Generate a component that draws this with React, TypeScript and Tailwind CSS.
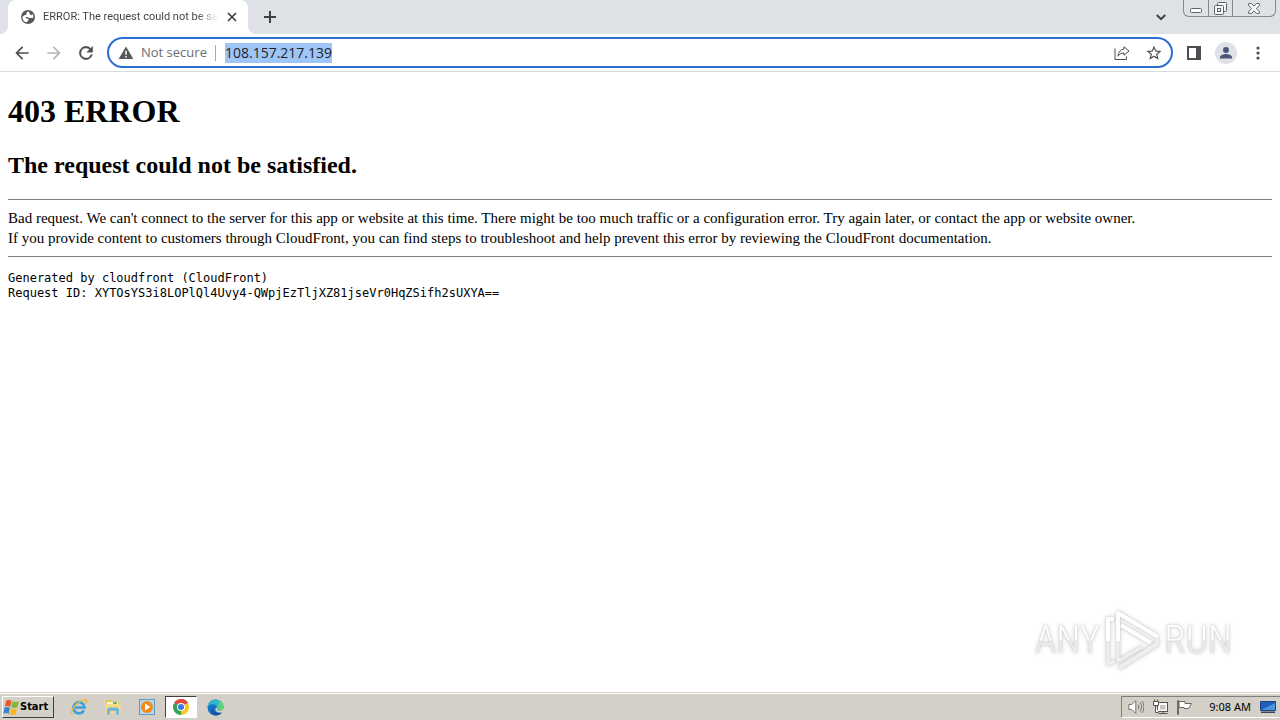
import type { ReactNode } from 'react'

const REQUEST_ID = 'XYTOsYS3i8LOPlQl4Uvy4-QWpjEzTljXZ81jseVr0HqZSifh2sUXYA=='

function IconButton({ label, children }: { label: string; children: ReactNode }) {
  return (
    <button aria-label={label} className="flex h-8 w-8 shrink-0 items-center justify-center text-[#4b4e52]">
      {children}
    </button>
  )
}

function WindowControls() {
  return (
    <div className="mr-1 flex h-[17px] w-[93px] shrink-0 rounded-b-md border border-t-0 border-[#85898f] text-[#5f6368]">
      <button aria-label="Minimize" className="flex flex-1 items-end justify-center pb-[3px]">
        <svg width="12" height="5" viewBox="0 0 12 5" fill="#fff" stroke="currentColor">
          <rect x="0.5" y="0.5" width="11" height="4" rx="1" />
        </svg>
      </button>
      <button aria-label="Restore" className="flex flex-1 items-center justify-center border-x border-[#85898f]">
        <svg width="13" height="13" viewBox="0 0 13 13" fill="#f4f5f7" stroke="currentColor">
          <rect x="3.5" y="0.5" width="9" height="9" rx="1" />
          <rect x="0.5" y="3.5" width="9" height="9" rx="1" />
          <rect x="3.5" y="6.5" width="3" height="3" />
        </svg>
      </button>
      <button aria-label="Close window" className="flex w-[42px] items-center justify-center">
        <svg width="12" height="11" viewBox="0 0 12 11" fill="#fff" stroke="currentColor" strokeLinejoin="round">
          <path d="M.6.6h3L6 3.2 8.400.6h3v1.900L8.300 5.500l3.100 3v1.900h-3L6 7.800l-2.400 2.600h-3V8.500l3.100-3-3.100-3z" />
        </svg>
      </button>
    </div>
  )
}

function TabStrip() {
  return (
    <div className="flex h-[34px] justify-between bg-[#dee1e6]">
      <div className="flex">
        <div className="flex w-2 items-end bg-white">
          <div className="h-full w-2 rounded-br-lg bg-[#dee1e6]" />
        </div>
        <div className="flex w-60 items-center rounded-t-lg bg-white pr-2 pl-3">
          <svg width="16" height="16" viewBox="0 0 16 16" className="shrink-0">
            <circle cx="8" cy="8" r="7" fill="#54575b" />
            <path
              d="M9.500 2.600C7.500 2.500 6 3.600 6.500 4.800c.3.800-.5 1.200-1.500 1.300-1.200.2-1 1.300-2.600 1.300C2.100 9.600 3.200 12 5.500 13.100c1.200.5 1.800.2 1.900-.7.1-1 1.300-.9 1.200-2C8.500 9.200 7 9.700 6 9.200c-.8-.5-.4-1.300.6-1.300 1.700-.1 2.200 1.200 3.600 1.100 1.200-.1 2 .3 3.100-.3.3-1.400 0-2.700-.7-3.800-.6.900-1.500 1.300-2.300.8-.7-.5-.1-1.300-.9-1.700-.7-.4-.6-1 .1-1.400z"
              fill="#fff"
            />
          </svg>
          <span className="mr-auto ml-[7px] bg-linear-to-r from-[#3c4043] from-88% to-transparent bg-clip-text font-['Roboto',sans-serif] text-[11px] leading-4 whitespace-nowrap text-transparent">
            ERROR: The request could not be sa
          </span>
          <button aria-label="Close tab" className="ml-1 flex h-4 w-4 items-center justify-center">
            <svg width="10" height="10" viewBox="0 0 10 10" stroke="#3c4043" strokeWidth="1.700">
              <path d="m1 1 8 8M9 1 1 9" />
            </svg>
          </button>
        </div>
        <div className="w-2 bg-white">
          <div className="h-full rounded-bl-lg bg-[#dee1e6]" />
        </div>
        <button aria-label="New tab" className="flex h-[34px] w-7 items-center justify-center">
          <svg width="12" height="12" viewBox="0 0 12 12" stroke="#3c4043" strokeWidth="2">
            <path d="M6 0v12M0 6h12" />
          </svg>
        </button>
      </div>
      <div className="flex">
        <button aria-label="Search tabs" className="mr-[10px] flex h-[34px] w-6 items-center justify-center">
          <svg width="10" height="7" viewBox="0 0 10 7" fill="none" stroke="#3c4043" strokeWidth="2">
            <path d="m.8 1 4.200 4.200L9.200 1" />
          </svg>
        </button>
        <WindowControls />
      </div>
    </div>
  )
}

function Toolbar() {
  return (
    <div className="flex h-[38px] items-center border-b border-[#dadce0] bg-white pr-[6px] pl-[6px]">
      <IconButton label="Back">
        <svg width="20" height="20" viewBox="0 0 24 24" fill="currentColor">
          <path d="M20 11H7.830l5.590-5.590L12 4l-8 8 8 8 1.410-1.410L7.830 13H20z" />
        </svg>
      </IconButton>
      <IconButton label="Forward">
        <svg width="20" height="20" viewBox="0 0 24 24" fill="#b4b6b9">
          <path d="m12 4-1.410 1.410L16.170 11H4v2h12.170l-5.580 5.590L12 20l8-8z" />
        </svg>
      </IconButton>
      <IconButton label="Reload">
        <svg width="20" height="20" viewBox="0 0 24 24" fill="currentColor" stroke="currentColor" strokeWidth="0.500">
          <path d="M17.650 6.350A8 8 0 1 0 19.730 14h-2.080A6 6 0 1 1 12 6c1.660 0 3.140.690 4.220 1.780L13 11h7V4z" />
        </svg>
      </IconButton>
      <div className="ml-[5px] flex h-[31px] min-w-0 flex-1 items-center rounded-full border-2 border-[#2b6fd0] bg-white pr-[1px] pl-[9px] font-['Open_Sans',sans-serif] text-sm">
        <svg width="16" height="16" viewBox="0 0 16 16" className="shrink-0">
          <path d="M8 1.500 15.300 14H.7z" fill="#54575b" />
          <path d="M8 5.800v4M8 11v1.500" stroke="#fff" strokeWidth="1.500" />
        </svg>
        <span className="ml-[7px] text-[13px] whitespace-nowrap text-[#6a6d71]">Not secure</span>
        <span className="mr-[9px] ml-2 h-4 w-px bg-[#a5a8ac]" />
        <input
          aria-label="Address and search bar"
          defaultValue="108.157.217.139"
          className="field-sizing-content h-5 bg-[#9ec5f6] text-[#1f2328] outline-none"
        />
        <div className="flex-1" />
        <IconButton label="Share this page">
          <svg width="16" height="16" viewBox="0 0 16 16" fill="none" stroke="currentColor">
            <path d="M1 3.500v11h11.500v-3" />
            <path d="M10 1.800 15 6l-5 4.200V8C7.200 8 5.400 9 4 11.200c.2-3.600 2.200-6.700 6-7.200z" strokeLinejoin="round" />
          </svg>
        </IconButton>
        <IconButton label="Bookmark this tab">
          <svg width="18" height="18" viewBox="0 0 24 24" fill="currentColor">
            <path d="m22 9.240-7.190-.620L12 2 9.190 8.630 2 9.240l5.460 4.730L5.820 21 12 17.270 18.180 21l-1.630-7.030zM12 15.400l-3.760 2.270 1-4.280-3.320-2.880 4.380-.380L12 6.100l1.710 4.040 4.380.380-3.320 2.880 1 4.280z" />
          </svg>
        </IconButton>
      </div>
      <div className="ml-[5px] flex">
        <IconButton label="Side panel">
          <svg width="14" height="14" viewBox="0 0 14 14">
            <path d="M0 0h14v14H0zm2 2v10h7V2z" fill="currentColor" fillRule="evenodd" />
          </svg>
        </IconButton>
        <IconButton label="Profile">
          <svg width="22" height="22" viewBox="0 0 22 22">
            <circle cx="11" cy="11" r="11" fill="#dee1e6" />
            <circle cx="11" cy="8" r="3" fill="#4a5673" />
            <path d="M5 16.500v-1.300c0-2.100 4-3.200 6-3.200s6 1.100 6 3.200v1.300z" fill="#4a5673" />
          </svg>
        </IconButton>
        <IconButton label="Menu">
          <svg width="4" height="14" viewBox="0 0 4 14" fill="currentColor">
            <circle cx="2" cy="2" r="1.600" />
            <circle cx="2" cy="7" r="1.600" />
            <circle cx="2" cy="12" r="1.600" />
          </svg>
        </IconButton>
      </div>
    </div>
  )
}

function Watermark() {
  return (
    <div className="absolute right-12 bottom-5 flex items-center gap-[3px] font-['Roboto_Condensed','Liberation_Sans_Narrow','Liberation_Sans',sans-serif] text-[39px] leading-none font-light [filter:drop-shadow(0_0_1px_#c8c8c8)_drop-shadow(0_0_2px_#dcdcdc)]">
      <span className="bg-linear-to-b from-white from-50% to-[#ececec] to-50% bg-clip-text text-transparent">ANY</span>
      <svg width="58" height="64" viewBox="0 0 58 64" fill="none" strokeLinejoin="round">
        <path d="M5 33v23l7-3M15 33v20l24-14" stroke="#efefef" strokeWidth="3" />
        <path d="M16 60 54 36v-5" stroke="#efefef" strokeWidth="4" />
        <path d="M5 33V11h6M15 33V5l40 24" stroke="#fff" strokeWidth="4" />
        <path d="M18 17l30 18" stroke="#fff" strokeWidth="4" />
      </svg>
      <span className="bg-linear-to-b from-white from-50% to-[#ececec] to-50% bg-clip-text text-transparent">RUN</span>
    </div>
  )
}

function ErrorPage() {
  return (
    <main className="relative flex-1 bg-white px-2 pt-5 text-black">
      <div className="font-['Liberation_Serif',serif] text-[15px] leading-5">
        <h1 className="text-[32px] leading-[38px] font-bold">403 ERROR</h1>
        <h2 className="mt-[21px] text-2xl leading-7 font-bold">The request could not be satisfied.</h2>
        <hr className="mt-5 mb-2 border-[#808080]" />
        <p>
          Bad request. We can't connect to the server for this app or website at this time. There might be too much
          traffic or a configuration error. Try again later, or contact the app or website owner.
          <br />
          If you provide content to customers through CloudFront, you can find steps to troubleshoot and help prevent
          this error by reviewing the CloudFront documentation.
        </p>
        <hr className="mt-2 mb-[14px] border-[#808080]" />
      </div>
      <pre className="font-['DejaVu_Sans_Mono',monospace] text-xs leading-[15px]">
        {`Generated by cloudfront (CloudFront)\nRequest ID: ${REQUEST_ID}`}
      </pre>
      <Watermark />
    </main>
  )
}

function WindowsFlag() {
  return (
    <svg width="17" height="17" viewBox="0 0 16 16" className="shrink-0">
      <path d="M3 1.500c2-1 3.600-.8 5 .1L6.800 7.300C5.300 6.400 3.700 6.300 1.800 7z" fill="#e8582b" />
      <path d="M8.800 2c1.800.9 3.600 1 6.200.1l-1.500 5.700c-2 .9-4.100.8-5.800-.1z" fill="#7fb83c" />
      <path d="M1.500 8c1.900-.8 3.500-.6 5 .3L5.300 14c-1.500-1-3.100-1-5-.3z" fill="#3f83c9" />
      <path d="M7.400 8.700c1.700.9 3.500 1 5.800.2l-1.400 5.700c-2 .8-3.900.7-5.600-.2z" fill="#f6b92c" />
    </svg>
  )
}

function InternetExplorerIcon() {
  return (
    <svg width="18" height="18" viewBox="0 0 18 18" fill="none">
      <path d="M14 12.300A5.600 5.600 0 1 1 14.600 9.500H5" stroke="#3a9fdc" strokeWidth="2.600" />
      <path d="M2.500 16.300C-.5 14 4.500 7 10 3.400c3.200-2.100 6.200-2.600 6.600-1 .2.800-.2 2-1 3.200" stroke="#e9b93a" strokeWidth="1.400" />
    </svg>
  )
}

function ExplorerIcon() {
  return (
    <svg width="18" height="18" viewBox="0 0 18 18">
      <path d="M2 2h5l1 1.500h7V13H2z" fill="#e8c65e" />
      <path d="M3 4h11v3H3z" fill="#fdf6d3" />
      <path d="M9 4h4v2H9z" fill="#6fb36c" />
      <path d="M1.500 6h15v9h-15z" fill="#f3da83" />
      <path d="M3 16.500V12c0-1.500 1-2.500 2.500-2.500h7c1.500 0 2.500 1 2.500 2.500v4.500h-3V13H6v3.500z" fill="#72b5dd" />
    </svg>
  )
}

function MediaPlayerIcon() {
  return (
    <svg width="18" height="18" viewBox="0 0 18 18">
      <rect x="1.500" y="1.500" width="15" height="15" fill="#b9d7ef" stroke="#5c9cc9" />
      <circle cx="9" cy="9" r="6" fill="#f28a1b" />
      <path d="M7 5.500v7l5.500-3.500z" fill="#fff" />
    </svg>
  )
}

function ChromeIcon() {
  return (
    <svg width="16" height="16" viewBox="0 0 16 16">
      <path d="M8 8 1.070 4A8 8 0 0 1 14.930 4z" fill="#df4a3c" />
      <path d="M8 8l6.930-4A8 8 0 0 1 8 16z" fill="#fbc820" />
      <path d="M8 8v8A8 8 0 0 1 1.070 4z" fill="#35a354" />
      <path d="M8 16l3.460-6L8 8z" fill="#fbc820" />
      <path d="M1.070 4l3.470 6L8 8z" fill="#35a354" />
      <path d="M8 4h6.930A8 8 0 0 0 8 0z" fill="#df4a3c" />
      <circle cx="8" cy="8" r="4" fill="#fff" />
      <circle cx="8" cy="8" r="3" fill="#3979e8" />
    </svg>
  )
}

function EdgeIcon() {
  return (
    <svg width="17" height="17" viewBox="0 0 17 17">
      <circle cx="8.500" cy="8.500" r="8" fill="#1673c5" />
      <path d="M.5 8.500C.8 3.800 4.300.5 8.600.5c4.700 0 7.900 3.300 7.900 6.900 0 2.600-1.800 4.300-4.200 4.300-1.700 0-2.800-.6-2.300-1.500C10.800 7.500 8.600 5.300 6 5.300 3 5.300 1 6.800.5 8.500z" fill="#32b8c4" />
      <path d="M16.500 7.400c0-2.800-1.800-5.200-4.500-6.300.6 3.600-.4 6.300-2 9.100-.5.900.6 1.500 2.300 1.500 2.400 0 4.200-1.700 4.200-4.300z" fill="#5fd17c" />
      <path d="M6.300 7.600c-1.500 3 .8 6.400 5.200 6.400 1.400 0 2.400-.3 3.500-.8-1.500 2.100-3.700 3.300-6.500 3.300-4.500-1-5.500-6-2.200-8.900z" fill="#15539e" />
      <path d="M10 8.200c.3.800.3 1.400 0 2-.5.900.6 1.500 2.300 1.500 1.700 0 3-.7 3.700-1.900h1v3.700h-2c-2.500.5-5.300-.2-6.300-1.800-.7-1.200-.1-2.800 1.300-3.500z" fill="#d4d0c8" />
    </svg>
  )
}

const pinned = [
  { name: 'Internet Explorer', icon: <InternetExplorerIcon />, active: false },
  { name: 'Windows Explorer', icon: <ExplorerIcon />, active: false },
  { name: 'Windows Media Player', icon: <MediaPlayerIcon />, active: false },
  { name: 'Google Chrome', icon: <ChromeIcon />, active: true },
  { name: 'Microsoft Edge', icon: <EdgeIcon />, active: false },
]

function Tray() {
  return (
    <div className="flex h-[22px] items-center border border-r-0 border-t-[#808080] border-b-white border-l-[#808080] pr-1 pl-[6px]">
      <svg width="16" height="16" viewBox="0 0 16 16" fill="#fff" stroke="#77736e">
        <path d="M.8 5.500h3l4-4v13l-4-4h-3z" />
        <path d="M10 5.500c1 1.500 1 3.500 0 5M12 3.500c2 2.700 2 6.300 0 9M14 2c2.500 3.500 2.500 8.500 0 12" fill="none" />
      </svg>
      <svg width="17" height="16" viewBox="0 0 17 16" fill="#fff" stroke="#56524e" className="ml-2">
        <rect x="5.500" y="3.500" width="10" height="9" />
        <path d="M8 6h5.500v4.500H8z" fill="#c9c6be" stroke="none" />
        <path d="M6.500 14.500h9M11 12.500v2" />
        <path d="M1.500 2.500h5v4h-5zM2.500.5v2M5.500.5v2M3.500 6.500v7h3" />
      </svg>
      <svg width="16" height="16" viewBox="0 0 16 16" fill="#fff" stroke="#6c6864" className="ml-[7px]">
        <path d="M1.500 1.500h1v14h-1z" />
        <path d="M3 2.500h6v2h6.500l-3 5H8v-1H3z" />
      </svg>
      <span className="ml-[17px] font-['Noto_Sans',sans-serif] text-[11px] text-black">9:08 AM</span>
      <button aria-label="Show desktop" className="ml-[9px]">
        <svg width="16" height="14" viewBox="0 0 16 14">
          <path d="M.5 1.500h15v9H.5z" fill="#1d5fb8" stroke="#1b4580" />
          <path d="M1 10 15 3v7z" fill="#4b94de" />
          <path d="M1 11.500h14V13H1z" fill="#33445c" />
        </svg>
      </button>
    </div>
  )
}

function Taskbar() {
  return (
    <footer className="border-t border-[#d4d0c8] bg-[#d4d0c8]">
      <div className="flex h-[27px] items-center justify-between border-t border-white">
        <div className="flex items-center">
          <button className="ml-[2px] flex h-[22px] w-[52px] items-center border border-t-white border-r-[#404040] border-b-[#404040] border-l-white font-['DejaVu_Sans_Condensed','DejaVu_Sans',sans-serif] text-[11px] font-bold text-black">
            <WindowsFlag />
            Start
          </button>
          <div className="ml-[9px] flex gap-[2px]">
            {pinned.map(({ name, icon, active }) => (
              <button
                key={name}
                aria-label={name}
                className={`flex h-[22px] w-8 items-center justify-center border ${
                  active ? 'border-t-[#404040] border-r-white border-b-white border-l-[#404040] bg-white' : 'border-transparent'
                }`}
              >
                {icon}
              </button>
            ))}
          </div>
        </div>
        <Tray />
      </div>
    </footer>
  )
}

export default function App() {
  return (
    <div className="flex min-h-screen flex-col bg-white">
      <header>
        <TabStrip />
        <Toolbar />
      </header>
      <ErrorPage />
      <Taskbar />
    </div>
  )
}
